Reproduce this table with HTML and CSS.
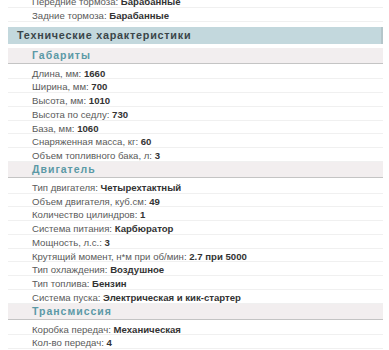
FILE: index.html
```html
<!DOCTYPE html>
<html lang="ru">
<head>
<meta charset="utf-8">
<title>Технические характеристики</title>
<link rel="stylesheet" href="styles.css">
</head>
<body>
<div class="specs">
  <div class="row">Передние тормоза: <b>Барабанные</b></div>
  <div class="row">Задние тормоза: <b>Барабанные</b></div>

  <div class="group">Технические характеристики</div>

  <div class="section">Габариты</div>
  <div class="row">Длина, мм: <b>1660</b></div>
  <div class="row">Ширина, мм: <b>700</b></div>
  <div class="row">Высота, мм: <b>1010</b></div>
  <div class="row">Высота по седлу: <b>730</b></div>
  <div class="row">База, мм: <b>1060</b></div>
  <div class="row">Снаряженная масса, кг: <b>60</b></div>
  <div class="row">Объем топливного бака, л: <b>3</b></div>

  <div class="section">Двигатель</div>
  <div class="row">Тип двигателя: <b>Четырехтактный</b></div>
  <div class="row">Объем двигателя, куб.см: <b>49</b></div>
  <div class="row">Количество цилиндров: <b>1</b></div>
  <div class="row">Система питания: <b>Карбюратор</b></div>
  <div class="row">Мощность, л.с.: <b>3</b></div>
  <div class="row">Крутящий момент, н*м при об/мин: <b>2.7 при 5000</b></div>
  <div class="row">Тип охлаждения: <b>Воздушное</b></div>
  <div class="row">Тип топлива: <b>Бензин</b></div>
  <div class="row">Система пуска: <b>Электрическая и кик-стартер</b></div>

  <div class="section">Трансмиссия</div>
  <div class="row">Коробка передач: <b>Механическая</b></div>
  <div class="row">Кол-во передач: <b>4</b></div>
</div>
</body>
</html>
```
FILE: styles.css
```css
html, body {
  margin: 0;
  padding: 0;
  background: #ffffff;
}

.specs {
  margin: -6px 6px 0 8px;
  font-family: "Liberation Sans", Arial, sans-serif;
  font-size: 9.6px;
  color: #5a5a5a;
}

.row {
  height: 13.75px;
  line-height: 13.75px;
  padding: 1px 0 0 24px;
  border-bottom: 1px solid #f0f0f0;
  box-sizing: border-box;
  white-space: nowrap;
}

.section + .row {
  margin-top: 2px;
}

.row b {
  color: #333333;
  font-weight: bold;
}

.group {
  margin-top: 5px;
  height: 17px;
  line-height: 17px;
  padding-left: 9px;
  background: #c3d8dd;
  border-right: 2px solid #b4c6ca;
  font-weight: bold;
  font-size: 10.8px;
  letter-spacing: 0.75px;
  color: #3a4549;
}

.section {
  margin-top: 4px;
  height: 16px;
  line-height: 15px;
  padding-left: 24px;
  background: #f2eeef;
  border-bottom: 1px solid #c4c4c4;
  box-sizing: border-box;
  font-weight: bold;
  font-size: 10.5px;
  letter-spacing: 1px;
  color: #5b99a6;
}

.row + .section {
  margin-top: 0;
}
```
